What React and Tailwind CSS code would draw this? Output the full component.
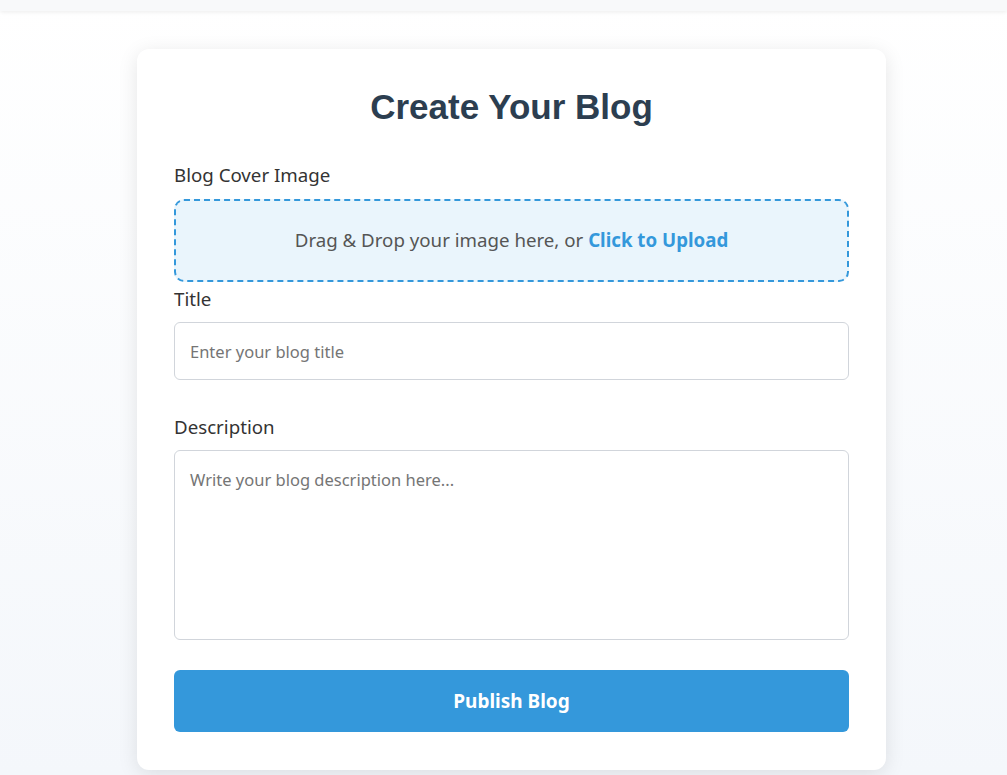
import React, { useState } from 'react';

const App = () => {
  const [title, setTitle] = useState('');
  const [desc, setDesc] = useState('');

  return (
    <div className="min-h-screen w-full bg-gradient-to-b from-white to-[#f4f7fb] font-['Segoe_UI','Noto_Sans',sans-serif]">
      <div className="h-[11px] w-full bg-[#f8f9fa] shadow-[0_1px_4px_rgba(0,0,0,0.08)]" />
      <div className="flex justify-center pt-[38px] pl-[16px]">
        <div className="w-[749px] rounded-xl bg-white px-[37px] pt-[36px] pb-[38px] shadow-[0_4px_20px_rgba(0,0,0,0.1)]">
          <h1 className="text-center font-['Liberation_Sans',Arial,sans-serif] text-[35px] font-bold leading-[44px] text-[#2c3e50]">
            Create Your Blog
          </h1>

          <label className="mt-[33px] block text-[18.7px] leading-[26px] text-[#333]">Blog Cover Image</label>
          <div className="mt-[11px] flex h-[83px] items-center justify-center rounded-[10px] border-2 border-dashed border-[#3498db] bg-[#eaf5fc] text-[18.7px] text-[#555]">
            <span>
              Drag &amp; Drop your image here, or{' '}
              <span className="font-bold text-[#3498db]">Click to Upload</span>
            </span>
          </div>

          <label className="mt-[4px] block text-[18.7px] leading-[26px] text-[#333]">Title</label>
          <input
            value={title}
            onChange={(e) => setTitle(e.target.value)}
            placeholder="Enter your blog title"
            className="mt-[10px] block h-[58px] w-full rounded-md border border-[#d1d5db] px-[15px] text-[16.5px] text-[#333] outline-none placeholder:text-[#757575]"
          />

          <label className="mt-[34px] block text-[18.7px] leading-[26px] text-[#333]">Description</label>
          <textarea
            value={desc}
            onChange={(e) => setDesc(e.target.value)}
            placeholder="Write your blog description here..."
            className="mt-[10px] block h-[190px] w-full resize-none rounded-md border border-[#d1d5db] px-[15px] py-[17px] text-[16.5px] leading-[24px] text-[#333] outline-none placeholder:text-[#757575]"
          />

          <button className="mt-[30px] flex h-[62px] w-full items-center justify-center rounded-md bg-[#3498db] text-[19px] font-bold text-white">
            Publish Blog
          </button>
        </div>
      </div>
    </div>
  );
};

export default App;
